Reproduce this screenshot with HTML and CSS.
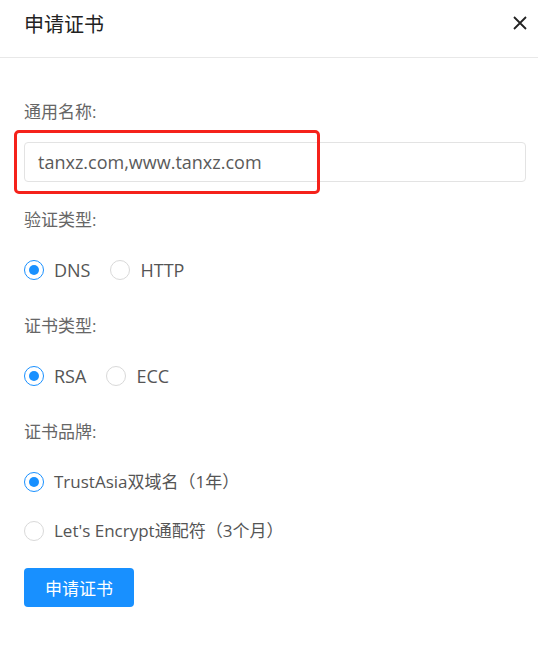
FILE: index.html
```html
<!DOCTYPE html>
<html lang="zh-CN">
<head>
<meta charset="utf-8">
<link rel="stylesheet" href="styles.css">
</head>
<body>
<div class="dialog">
  <div class="header">
    <div class="title">申请证书</div>
    <div class="close">
      <svg width="14" height="14" viewBox="0 0 14 14"><path d="M1 1 L13 13 M13 1 L1 13" stroke="#222" stroke-width="1.8" fill="none"/></svg>
    </div>
  </div>
  <div class="body">
    <div class="label">通用名称:</div>
    <div class="input-wrap">
      <div class="input">tanxz.com,www.tanxz.com</div>
      <div class="mark"></div>
    </div>
    <div class="label">验证类型:</div>
    <div class="radios">
      <label class="radio large checked"><span class="dot"></span><span>DNS</span></label>
      <label class="radio large"><span class="dot"></span><span>HTTP</span></label>
    </div>
    <div class="label">证书类型:</div>
    <div class="radios">
      <label class="radio large checked"><span class="dot"></span><span>RSA</span></label>
      <label class="radio large"><span class="dot"></span><span>ECC</span></label>
    </div>
    <div class="label">证书品牌:</div>
    <div class="radios column">
      <label class="radio checked"><span class="dot"></span><span>TrustAsia双域名（1年）</span></label>
      <label class="radio"><span class="dot"></span><span>Let's Encrypt通配符（3个月）</span></label>
    </div>
    <button class="btn">申请证书</button>
  </div>
</div>
</body>
</html>
```
FILE: styles.css
```css
* { box-sizing: border-box; }
body {
  margin: 0;
  background: #fff;
  font-family: "Open Sans", "Noto Sans CJK SC", sans-serif;
  color: #666;
}
.dialog { width: 538px; }
.header {
  height: 58px;
  border-bottom: 1px solid #e8e8e8;
  display: flex;
  align-items: center;
  justify-content: space-between;
  padding: 0 11px 0 24px;
}
.title {
  font-size: 20px;
  color: #222;
  margin-top: -10px;
}
.close { margin-top: -12px; display: flex; }
.body { padding: 42px 12px 0 24px; }
.label {
  font-size: 17px;
  line-height: 24px;
  color: #666;
}
.input-wrap {
  position: relative;
  margin: 18px 0 26px;
}
.input {
  height: 40px;
  border: 1px solid #e3e3e3;
  border-radius: 4px;
  padding: 0 13px;
  font-size: 18px;
  line-height: 38px;
  color: #5a5a5a;
}
.mark {
  position: absolute;
  left: -10px;
  top: -12px;
  width: 306px;
  height: 64px;
  border: 3px solid #f5221b;
  border-radius: 5px;
}
.radios {
  display: flex;
  gap: 20px;
  margin: 25px 0 31px;
}
.radios.column {
  flex-direction: column;
  gap: 23px;
  margin-bottom: 24px;
}
.radio {
  display: flex;
  align-items: center;
  gap: 10px;
  font-size: 17px;
  line-height: 26px;
  color: #555;
}
.radio.large { font-size: 18px; }
.dot {
  width: 20px;
  height: 20px;
  border-radius: 50%;
  border: 1px solid #d9d9d9;
  display: flex;
  align-items: center;
  justify-content: center;
}
.radio.checked .dot { border-color: #1890ff; }
.radio.checked .dot::after {
  content: "";
  width: 10px;
  height: 10px;
  border-radius: 50%;
  background: #1890ff;
}
.btn {
  display: block;
  border: 0;
  background: #1890ff;
  color: #fff;
  font-family: inherit;
  font-size: 17px;
  height: 39px;
  width: 110px;
  border-radius: 4px;
}
```
